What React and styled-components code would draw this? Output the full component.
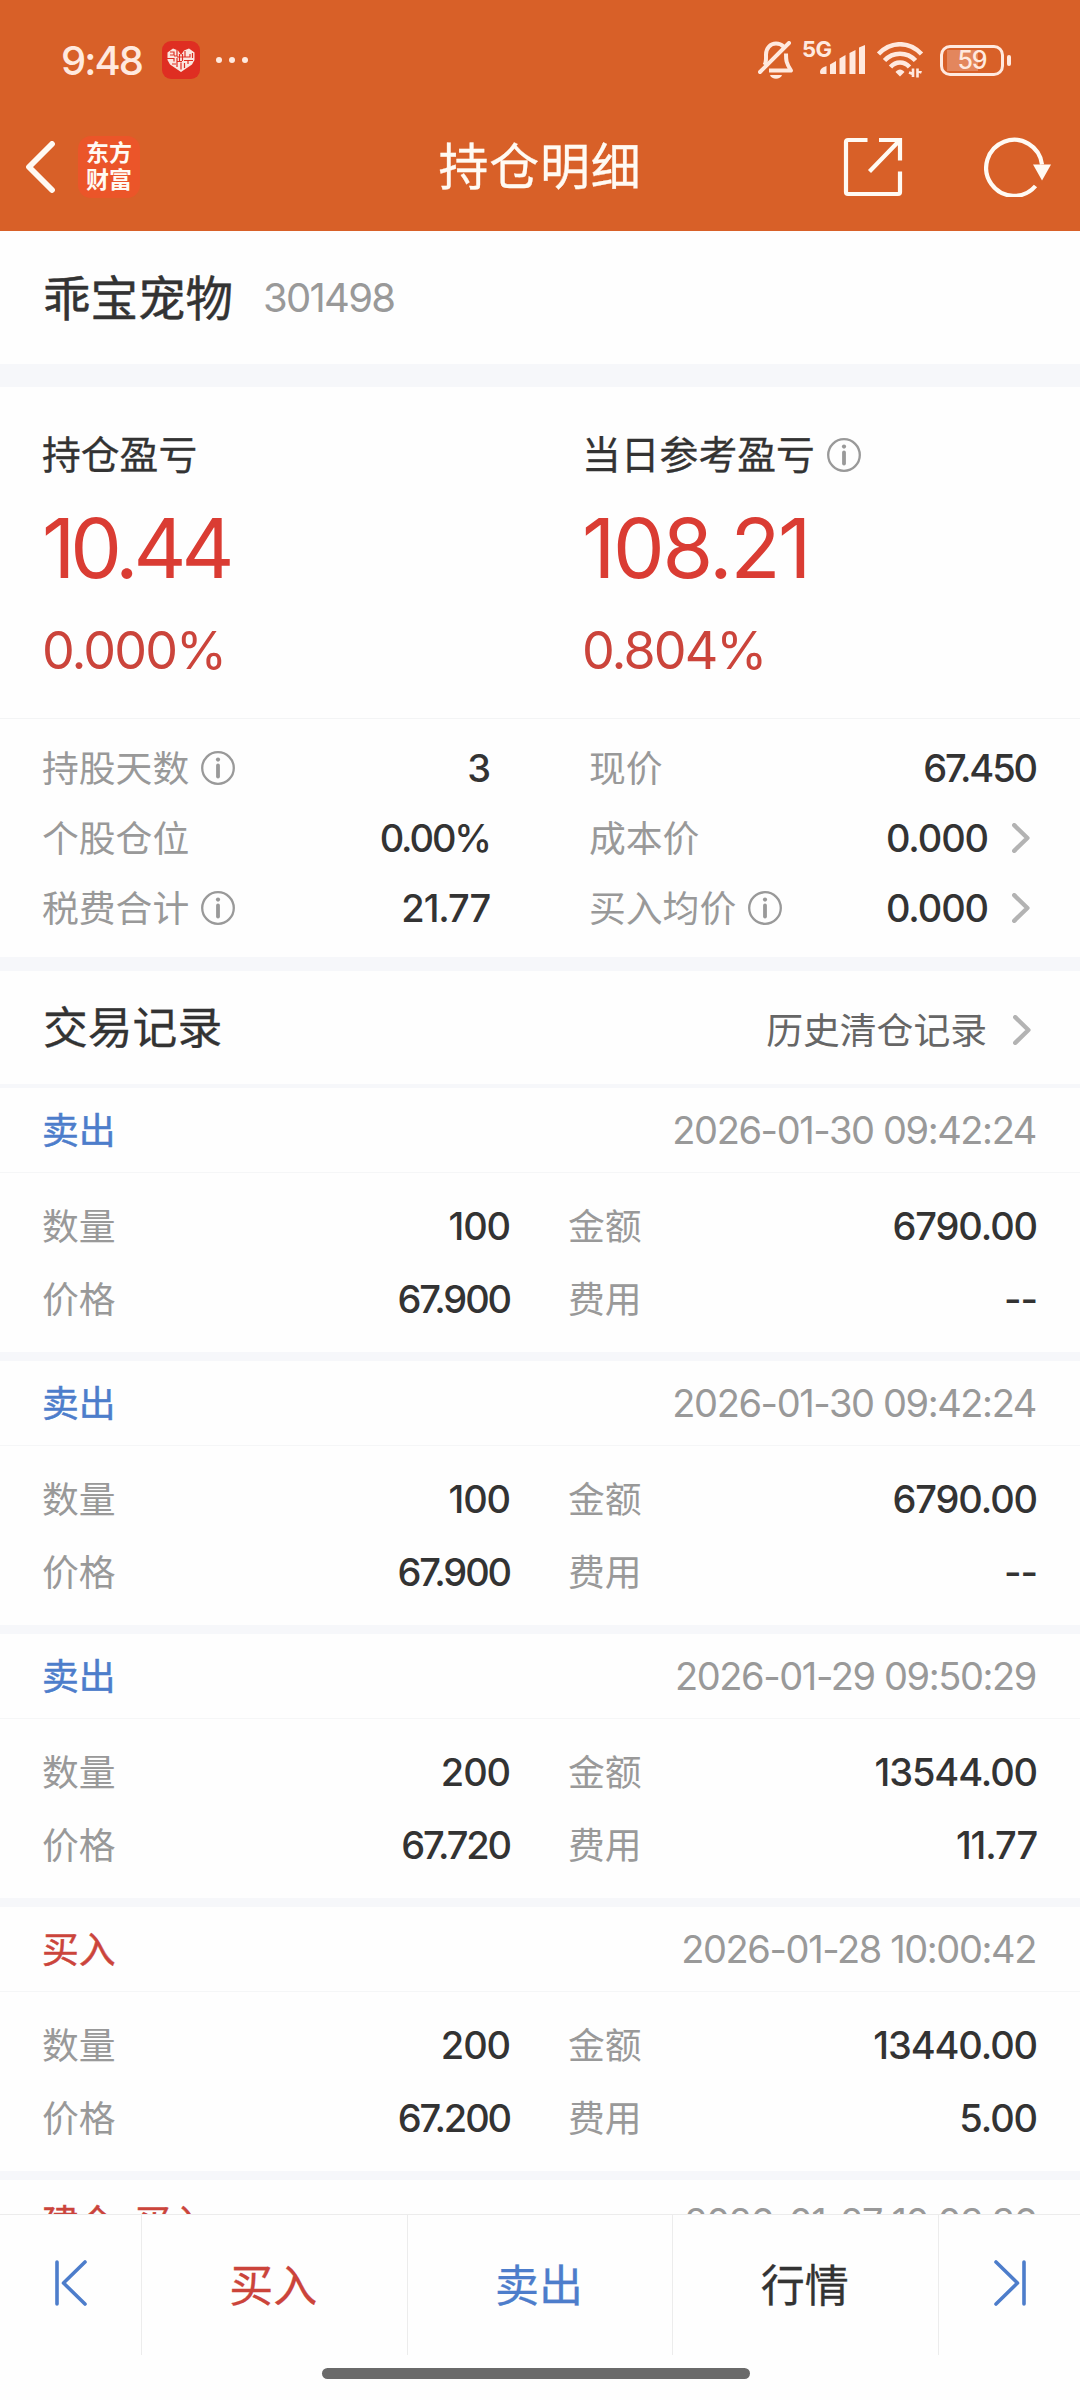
import styled, { createGlobalStyle } from "styled-components";

const GlobalStyle = createGlobalStyle`
  * {
    box-sizing: border-box;
  }

  body {
    margin: 0;
    background-color: #fff;
    color: #333;
    font-family: Inter, "Noto Sans CJK SC", sans-serif;
  }
`;

const stats = [
  [
    { label: "持股天数", value: "3", info: true },
    { label: "个股仓位", value: "0.00%" },
    { label: "税费合计", value: "21.77", info: true },
  ],
  [
    { label: "现价", value: "67.450" },
    { label: "成本价", value: "0.000", link: true },
    { label: "买入均价", value: "0.000", info: true, link: true },
  ],
];

const records = [
  {
    side: "卖出",
    time: "2026-01-30 09:42:24",
    count: "100",
    amount: "6790.00",
    price: "67.900",
    fee: "--",
  },
  {
    side: "卖出",
    time: "2026-01-30 09:42:24",
    count: "100",
    amount: "6790.00",
    price: "67.900",
    fee: "--",
  },
  {
    side: "卖出",
    time: "2026-01-29 09:50:29",
    count: "200",
    amount: "13544.00",
    price: "67.720",
    fee: "11.77",
  },
  {
    side: "买入",
    time: "2026-01-28 10:00:42",
    count: "200",
    amount: "13440.00",
    price: "67.200",
    fee: "5.00",
    buy: true,
  },
  {
    side: "建仓 买入",
    time: "2026-01-27 10:03:36",
    buy: true,
  },
];

const isTight = (value) => value.includes("7.") || value.includes("%");

const InfoIcon = () => (
  <svg width="34" height="34" viewBox="0 0 34 34" fill="none">
    <circle cx="17" cy="17" r="15.8" stroke="#999" strokeWidth="2.3" />
    <circle cx="17" cy="8.6" r="2.1" fill="#999" />
    <path d="M17 14.500v11" stroke="#999" strokeWidth="3.8" strokeLinecap="round" />
  </svg>
);

const Chevron = () => (
  <svg width="18" height="30" viewBox="0 0 18 30" fill="none">
    <path
      d="M2.2 2.2L15.4 15L2.2 27.8"
      stroke="#b3b3b3"
      strokeWidth="4.4"
      strokeLinecap="round"
      strokeLinejoin="round"
    />
  </svg>
);

const HeartApp = () => (
  <svg width="38" height="38" viewBox="0 0 38 38">
    <rect width="38" height="38" rx="9" fill="#df2e22" />
    <path
      d="M19 31L8 23.500L5.500 19V11.500L11 7.500L16 9.500L19 14L22 9.500L27 7.500L32.500 11.500V19L30 23.500Z"
      fill="#fbe6df"
    />
    <path
      d="M8 11h4v3H8M15 9v6h-3M5 17.500h7v3M15 17v9M17.500 13v7M20.500 13v7M23 10v6h5v-3M30.500 12v5M22 19.500h9M26 23v-3M19 21.500v7M10 23h4M22.500 22v5M15 16h8M15 20.500h5"
      stroke="#df2e22"
      strokeWidth="1.2"
      fill="none"
    />
  </svg>
);

const BellOff = () => (
  <svg width="36" height="38" viewBox="0 0 36 38" fill="none" stroke="#ffe9df">
    <path
      d="M6.500 24C8.500 21 8 18 8 13.500C8 7 12.500 2.500 18 2.500C21 2.500 23.500 3.500 25.500 5.500M28 12.500C28 19 28 22 33 29.500H11"
      strokeWidth="4"
      strokeLinejoin="round"
    />
    <path d="M2 31L31 2" strokeWidth="4" strokeLinecap="round" />
    <path d="M12 34H24C22.500 39 13.500 39 12 34Z" fill="#ffe9df" stroke="none" />
  </svg>
);

const Signal = () => (
  <svg width="46" height="30" viewBox="0 0 46 30" fill="#ffe9df">
    <path d="M1 27C1 24 4 22 7.500 21V29H2.500C1.500 29 1 28.500 1 27Z" />
    <path d="M11 19.500L17 16V29H11Z" />
    <path d="M20.500 13.500L26.500 10V29H20.500Z" />
    <path d="M30.500 8L36.500 5V29H30.500Z" />
    <path d="M40 2.500L46 0V29H40Z" />
  </svg>
);

const Wifi = () => (
  <svg width="47" height="36" viewBox="0 0 47 36" fill="none" stroke="#ffe9df">
    <path d="M1.500 12C14 -1 32 -1 44.500 12" strokeWidth="4.6" />
    <path d="M7.500 18.500C16 9.500 30 9.500 38.500 18.500" strokeWidth="4.6" />
    <path d="M13.500 25C19 19 27 19 32.500 25" strokeWidth="4.6" />
    <path
      d="M18.500 30C21 26.500 25 26.500 27.500 30L23 34.500Z"
      fill="#ffe9df"
      stroke="none"
    />
    <path
      d="M32 30.500L36 32V26.500V35M44.500 30.500L40.500 29V35.500V26.500"
      strokeWidth="2.6"
    />
  </svg>
);

const BackArrow = () => (
  <svg width="30" height="52" viewBox="0 0 30 52" fill="none">
    <path
      d="M27 3L4 26L27 49"
      stroke="#fffaf3"
      strokeWidth="5.800"
      strokeLinecap="round"
      strokeLinejoin="round"
    />
  </svg>
);

const ShareIcon = () => (
  <svg width="60" height="60" viewBox="0 0 60 60" fill="none" stroke="#fffaf3">
    <path
      d="M24.500 3H5Q3 3 3 5V55Q3 57 5 57H55Q57 57 57 55V34.500"
      strokeWidth="4.200"
    />
    <path d="M36 3H57V23.500M56.500 3.500L26.500 34.500" strokeWidth="4.200" />
  </svg>
);

const RefreshIcon = () => (
  <svg width="68" height="60" viewBox="0 0 68 60" fill="none">
    <path
      d="M51.500 49A28 28 0 1 1 58 27.500"
      stroke="#fffaf3"
      strokeWidth="4.200"
    />
    <path d="M49 27.500H67L58 43.500Z" fill="#fffaf3" />
  </svg>
);

const Skip = ({ flip }) => (
  <svg
    width="32"
    height="46"
    viewBox="0 0 32 46"
    fill="none"
    stroke="#4d7dcb"
    strokeWidth="3.600"
    strokeLinecap="round"
    strokeLinejoin="round"
  >
    {flip ? (
      <path d="M30 2V44M2 2L23.500 23L2 44" />
    ) : (
      <path d="M2 2V44M30 2L8.500 23L30 44" />
    )}
  </svg>
);

const Stat = ({ label, value, info, link }) => (
  <Row>
    <Label>
      <span>{label}</span>
      {info && <InfoIcon />}
    </Label>
    <Value>
      <Num $tight={isTight(value)}>{value}</Num>
      {link && <Chevron />}
    </Value>
  </Row>
);

const Field = ({ label, value }) => (
  <Row>
    <Label>
      <span>{label}</span>
    </Label>
    <Num $tight={isTight(value)}>{value}</Num>
  </Row>
);

const Record = ({ record }) => (
  <StyledRecord>
    <RecordHead>
      <Side $buy={record.buy}>{record.side}</Side>
      <Time>{record.time}</Time>
    </RecordHead>
    {record.count && (
      <RecordBody>
        <Field label="数量" value={record.count} />
        <Field label="金额" value={record.amount} />
        <Field label="价格" value={record.price} />
        <Field label="费用" value={record.fee} />
      </RecordBody>
    )}
  </StyledRecord>
);

const App = () => {
  return (
    <Screen>
      <GlobalStyle />
      <Top>
        <StatusBar>
          <Clock>9:48</Clock>
          <HeartApp />
          <Dots>
            <i />
            <i />
            <i />
          </Dots>
          <StatusIcons>
            <BellOff />
            <Network>5G</Network>
            <Signal />
            <Wifi />
            <Battery>59</Battery>
          </StatusIcons>
        </StatusBar>
        <NavBar>
          <NavSide>
            <BackArrow />
            <Brand>
              东方
              <br />
              财富
            </Brand>
          </NavSide>
          <Title>持仓明细</Title>
          <NavSide $end>
            <ShareIcon />
            <RefreshIcon />
          </NavSide>
        </NavBar>
      </Top>

      <Content>
        <Stock>
          <StockName>乖宝宠物</StockName>
          <StockCode>301498</StockCode>
        </Stock>
        <Gap $size={23} />

        <Profits>
          <div>
            <ProfitLabel>
              <span>持仓盈亏</span>
            </ProfitLabel>
            <ProfitValue $tracking={-5}>10.44</ProfitValue>
            <ProfitRate>0.000%</ProfitRate>
          </div>
          <div>
            <ProfitLabel>
              <span>当日参考盈亏</span>
              <InfoIcon />
            </ProfitLabel>
            <ProfitValue $tracking={-2.3}>108.21</ProfitValue>
            <ProfitRate>0.804%</ProfitRate>
          </div>
        </Profits>

        <Stats>
          {stats.map((column, i) => (
            <div key={i}>
              {column.map((stat) => (
                <Stat key={stat.label} {...stat} />
              ))}
            </div>
          ))}
        </Stats>
        <Gap $size={14} />

        <SectionHead>
          <SectionTitle>交易记录</SectionTitle>
          <History>
            历史清仓记录
            <Chevron />
          </History>
        </SectionHead>
        <Gap $size={4} />

        {records.map((record, i) => (
          <Record key={i} record={record} />
        ))}
      </Content>

      <BottomBar>
        <SkipButton>
          <Skip />
        </SkipButton>
        <Action $color="#cb443b">买入</Action>
        <Action $color="#4d7dcb">卖出</Action>
        <Action $color="#333">行情</Action>
        <SkipButton>
          <Skip flip />
        </SkipButton>
      </BottomBar>
      <HomeArea>
        <HomeIndicator />
      </HomeArea>
    </Screen>
  );
};

const Screen = styled.div`
  display: flex;
  flex-direction: column;
  width: 1080px;
  height: 2400px;
  overflow: hidden;
  background-color: #fefefe;

  svg {
    display: block;
    flex-shrink: 0;
  }
`;

const Top = styled.header`
  flex-shrink: 0;
  height: 231px;
  background-color: #d86028;
  color: #fffaf3;
`;

const StatusBar = styled.div`
  display: flex;
  align-items: center;
  height: 106px;
  padding: 14px 73px 0 61px;
  color: #ffe9df;
`;

const Clock = styled.span`
  width: 101px;
  font-size: 40px;
  font-weight: 500;
  letter-spacing: -1.9px;
`;

const Dots = styled.span`
  display: flex;
  gap: 7px;
  margin-left: 16px;

  i {
    width: 6px;
    height: 6px;
    border-radius: 50%;
    background-color: #ffe9df;
  }
`;

const StatusIcons = styled.div`
  display: flex;
  align-items: center;
  margin-left: auto;
`;

const Network = styled.span`
  align-self: flex-start;
  width: 17px;
  margin-left: 8px;
  font-size: 22px;
  font-weight: 700;
  letter-spacing: -0.5px;
  line-height: 16px;
  white-space: nowrap;

  & + svg {
    margin-right: 12px;
  }
`;

const Battery = styled.span`
  display: flex;
  align-items: center;
  justify-content: center;
  position: relative;
  width: 64px;
  height: 31px;
  margin: 0 3px 0 16px;
  border: 3px solid #ffe9df;
  border-radius: 10px;
  background: linear-gradient(#e3865d, #e3865d) 4px 2px / 31px 21px no-repeat;
  font-size: 25px;
  font-weight: 500;
  letter-spacing: -1px;

  &::after {
    content: "";
    position: absolute;
    right: -10px;
    width: 4px;
    height: 11px;
    border-radius: 2px;
    background-color: #ffe9df;
  }
`;

const NavBar = styled.nav`
  display: grid;
  grid-template-columns: 1fr auto 1fr;
  align-items: center;
  height: 122px;
  padding: 0 28px 0 25px;
`;

const NavSide = styled.div`
  display: flex;
  align-items: center;
  justify-content: ${(props) => (props.$end ? "flex-end" : "flex-start")};
  gap: ${(props) => (props.$end ? "81px" : "23px")};
`;

const Brand = styled.div`
  display: flex;
  align-items: center;
  justify-content: center;
  width: 62px;
  height: 62px;
  border-radius: 13px;
  background-color: #eb5529;
  font-size: 23px;
  font-weight: 700;
  line-height: 27px;
`;

const Title = styled.h1`
  margin: 0;
  padding-left: 3px;
  font-size: 50px;
  font-weight: 400;
  letter-spacing: 0.8px;
  line-height: 60px;
  -webkit-text-stroke: 0.3px;
`;

const Content = styled.main`
  flex: 1;
  min-height: 0;
  overflow: hidden;
`;

const Gap = styled.div`
  height: ${(props) => props.$size}px;
  background-color: #f6f7fa;
`;

const Stock = styled.div`
  display: flex;
  align-items: center;
  gap: 30px;
  height: 133px;
  padding: 0 43px;
`;

const StockName = styled.span`
  margin-bottom: 5px;
  font-size: 47.5px;
  -webkit-text-stroke: 0.5px;
`;

const StockCode = styled.span`
  font-size: 40px;
  letter-spacing: -1.7px;
  color: #999;
`;

const Profits = styled.section`
  display: grid;
  grid-template-columns: 1fr 1fr;
  height: 332px;
  padding: 38px 0 0 42px;
  border-bottom: 1px solid #f3f4f5;

  & > div:last-child {
    padding-left: 21px;
  }
`;

const ProfitLabel = styled.div`
  display: flex;
  align-items: center;
  gap: 12px;
  height: 60px;
  font-size: 38.8px;
  -webkit-text-stroke: 0.3px;

  span {
    margin-bottom: 6px;
  }
`;

const ProfitValue = styled.div`
  margin-top: 14px;
  font-size: 82px;
  line-height: 100px;
  letter-spacing: ${(props) => props.$tracking}px;
  color: #da3c33;
`;

const ProfitRate = styled.div`
  margin-top: 22px;
  font-size: 52px;
  line-height: 60px;
  letter-spacing: -1.9px;
  color: #cb443b;
`;

const Stats = styled.section`
  display: grid;
  grid-template-columns: 448px 447px;
  justify-content: space-between;
  height: 238px;
  padding: 14px 44px 0 42px;
`;

const Row = styled.div`
  display: flex;
  align-items: center;
  justify-content: space-between;
  height: 70px;
`;

const Label = styled.span`
  display: flex;
  align-items: center;
  gap: 12px;
  font-size: 36.8px;
  color: #999;

  span {
    margin-bottom: 4px;
  }
`;

const Value = styled.span`
  display: flex;
  align-items: center;
  gap: 24px;

  svg {
    margin-right: 6px;
  }
`;

const Num = styled.span`
  font-size: 38px;
  font-weight: 500;
  letter-spacing: ${(props) => (props.$tight ? "-2.1px" : "-1.1px")};
`;

const SectionHead = styled.div`
  display: flex;
  align-items: center;
  justify-content: space-between;
  height: 113px;
  padding: 0 49px 0 43px;
`;

const SectionTitle = styled.h2`
  margin: 0 0 6px;
  font-size: 44.8px;
  font-weight: 400;
  -webkit-text-stroke: 0.3px;
`;

const History = styled.span`
  display: flex;
  align-items: center;
  gap: 26px;
  font-size: 36.8px;
  color: #666;

  svg {
    margin-top: 4px;
  }
`;

const StyledRecord = styled.article`
  height: 273px;
  border-bottom: 9px solid #f6f7fa;
`;

const RecordHead = styled.div`
  display: flex;
  align-items: center;
  justify-content: space-between;
  height: 85px;
  padding: 0 44px 0 42px;
  border-bottom: 1px solid #f5f6f7;
`;

const Side = styled.span`
  margin-bottom: 4px;
  font-size: 36.8px;
  word-spacing: 8px;
  color: ${(props) => (props.$buy ? "#cb443b" : "#4d7dcb")};
  -webkit-text-stroke: 0.5px;
`;

const Time = styled.span`
  font-size: 38px;
  letter-spacing: -1.4px;
  color: #999;
`;

const RecordBody = styled.div`
  display: grid;
  grid-template-columns: 468px 1fr;
  grid-auto-rows: 73px;
  column-gap: 58px;
  align-items: center;
  padding: 16px 43px 0 42px;
`;

const BottomBar = styled.footer`
  display: flex;
  flex-shrink: 0;
  height: 141px;
  border-top: 1px solid #ececec;

  & > * + * {
    border-left: 1px solid #ececec;
  }
`;

const SkipButton = styled.div`
  display: flex;
  align-items: center;
  justify-content: center;
  width: 141px;
  padding-bottom: 4px;

  &:last-child {
    width: 142px;
  }
`;

const Action = styled.div`
  display: flex;
  flex: 1;
  align-items: center;
  justify-content: center;
  padding: 0 2px 5px 0;
  font-size: 44px;
  color: ${(props) => props.$color};
  -webkit-text-stroke: 0.3px;
`;

const HomeArea = styled.div`
  display: flex;
  flex-shrink: 0;
  justify-content: center;
  height: 45px;
  padding: 13px 8px 0 0;
`;

const HomeIndicator = styled.div`
  width: 428px;
  height: 11px;
  border-radius: 6px;
  background-color: #6a6a6a;
`;

export default App;
